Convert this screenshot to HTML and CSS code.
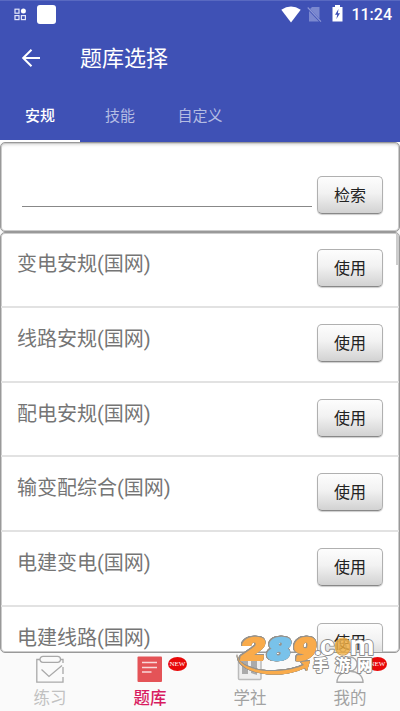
FILE: index.html
```html
<!DOCTYPE html>
<html lang="zh-CN">
<head>
<meta charset="utf-8">
<title>题库选择</title>
<link rel="stylesheet" href="styles.css">
</head>
<body>
<div class="app">
  <header class="header">
    <div class="status">
      <svg class="status-grid" width="13" height="13" viewBox="0 0 13 13" fill="none" stroke="#e3e6fa" stroke-width="1.2"><rect x="1" y="1.2" width="4" height="4"/><rect x="1" y="7.6" width="4" height="4"/><rect x="7.4" y="7.6" width="4" height="4"/><circle cx="9.4" cy="3" r="2.5" fill="#fff" stroke="none"/></svg>
      <span class="status-square"></span>
      <svg class="wifi" width="20" height="17" viewBox="0 0 20 17"><path d="M.3 3.7Q10-2.7 19.700 3.700L10 16.500Z" fill="#fff"/></svg>
      <svg class="sim" width="15" height="17" viewBox="0 0 15 17"><path d="M5 1H12.500V12.800L3 3ZM2 5L12 15.500H2Z" fill="#7b88cf"/><path d="M.7 1.500L14 15.600" stroke="#8d98d6" stroke-width="1.100"/></svg>
      <svg class="battery" width="11" height="17" viewBox="0 0 11 17"><path d="M3 0H8V2H10.500V16.500H.5V2H3Z" fill="#fff"/><path d="M6.500 4L3 9.800H5.200L4.400 14L8 8.300H5.900Z" fill="#3f51b5"/></svg>
      <span class="clock">11:24</span>
    </div>
    <div class="toolbar">
      <svg class="back" width="20" height="20" viewBox="0 0 20 20" fill="none" stroke="#fff" stroke-width="2"><path d="M19 10H2.500M10.500 1.700L2.200 10L10.500 18.300"/></svg>
      <h1 class="title">题库选择</h1>
    </div>
    <nav class="tabs">
      <span class="tab active">安规</span><span class="tab">技能</span><span class="tab">自定义</span>
    </nav>
  </header>
  <section class="card search">
    <input class="query" type="text" aria-label="检索">
    <button class="btn">检索</button>
  </section>
  <main class="card list">
    <span class="scroll"></span>
    <div class="row"><span class="name">变电安规(国网)</span><button class="btn">使用</button></div>
    <div class="row"><span class="name">线路安规(国网)</span><button class="btn">使用</button></div>
    <div class="row"><span class="name">配电安规(国网)</span><button class="btn">使用</button></div>
    <div class="row"><span class="name">输变配综合(国网)</span><button class="btn">使用</button></div>
    <div class="row"><span class="name">电建变电(国网)</span><button class="btn">使用</button></div>
    <div class="row"><span class="name">电建线路(国网)</span><button class="btn">使用</button></div>
  </main>
  <footer class="nav">
    <div class="item pale">
      <svg width="30" height="29" viewBox="0 0 30 29" fill="none" stroke="#a9a9a9" stroke-width="1.300"><path d="M5 4.500H1.800V27.200H28V22M28 19V12M28 8V4.500H25"/><rect x="5" y="1.300" width="20.500" height="6" rx="3"/><path d="M6.500 14.500L14 21.500L27 10.500"/></svg>
      <span>练习</span>
    </div>
    <div class="item selected">
      <svg width="30" height="29" viewBox="0 0 30 29"><rect x="2.500" y="1.500" width="24.500" height="25.500" rx="1" fill="#e45357"/><path d="M7 7.500H22M7 12.500H22M7 17H16.500" stroke="#f9d8d9" stroke-width="1.500"/></svg>
      <span>题库</span><b class="badge">NEW</b>
    </div>
    <div class="item">
      <svg width="30" height="29" viewBox="0 0 30 29"><rect x="3.500" y="3" width="22.500" height="21.500" rx="1" fill="#eee" stroke="#bbb" stroke-width="1.500"/><path d="M7 4H13V19H7ZM16 4H22V20L16 18Z" fill="#aaa"/></svg>
      <span>学社</span>
    </div>
    <div class="item">
      <svg width="30" height="29" viewBox="0 0 30 29" fill="none" stroke="#aaa" stroke-width="1.400"><circle cx="15" cy="9" r="7"/><path d="M2 27.300C2 12.500 28 12.500 28 27.300Z" fill="#fafafa"/></svg>
      <span>我的</span><b class="badge">NEW</b>
    </div>
  </footer>
  <svg class="mark" width="150" height="46" viewBox="0 0 150 46">
    <circle cx="107" cy="11" r="8.500" fill="#f3ae3d" opacity=".8"/>
    <g class="outline">
      <path d="M2 18C-1 31 22 37 40 36C52 35.500 62 33 68 30L65 27L74 26L71 36L69 33C55 40 38 41 24 38C8 35 0 27 2 18Z" fill="#f9ab4b"/>
      <g class="mark-num" stroke-width="2" stroke-linejoin="round" transform="skewX(-10)">
        <text x="8" y="25" textLength="24" lengthAdjust="spacingAndGlyphs" fill="#f9ab4b" stroke="#f9ab4b">2</text>
        <text x="34" y="25" textLength="24" lengthAdjust="spacingAndGlyphs" fill="#79c2ea" stroke="#79c2ea">8</text>
        <text x="60" y="25" textLength="23" lengthAdjust="spacingAndGlyphs" fill="#f9ab4b" stroke="#f9ab4b">9</text>
      </g>
    </g>
    <g stroke="#8b8b8b" stroke-width="1.800" stroke-linejoin="round" paint-order="stroke" fill="#fff">
      <text class="mark-com" y="20"><tspan x="78">.</tspan><tspan x="84">c</tspan><tspan x="99" fill="none" stroke="#d7a34e" stroke-width="1">o</tspan><tspan x="114">m</tspan></text>
      <text class="mark-cn" y="35.500"><tspan x="77">手</tspan><tspan x="99">游</tspan><tspan x="121">网</tspan></text>
    </g>
  </svg>
</div>
</body>
</html>
```
FILE: styles.css
```css
* { box-sizing: border-box; }
body { margin: 0; background: #fafafa; font-family: Roboto, "Noto Sans CJK SC", sans-serif; }
.app { position: relative; width: 400px; height: 711px; display: flex; flex-direction: column; overflow: hidden; }
.header { height: 142px; flex: none; background: #3f51b5; color: #fff; border-top: 1px solid #5969c1; }
.status { height: 27px; display: flex; align-items: center; padding: 0 8px 0 14px; }
.status-square { width: 19px; height: 19px; border-radius: 3px; background: #fff; margin: -1px 0 0 10px; }
.status-grid { margin-top: -1px; }
.wifi { margin-left: auto; margin-top: -1px; }
.sim { margin-left: 6px; margin-top: -1px; }
.battery { margin-left: 10px; margin-top: -2px; }
.clock { margin-left: 8px; font-size: 16px; font-weight: 500; line-height: 27px; }
.toolbar { height: 60px; display: flex; align-items: center; padding-left: 21px; }
.title { margin: 2px 0 0 39px; font-size: 22px; font-weight: 400; line-height: 60px; }
.tabs { height: 54px; display: flex; }
.tab { width: 80px; text-align: center; font-size: 15px; line-height: 57px; color: #b4bce3; }
.tab.active { color: #fff; font-weight: 500; border-bottom: 2px solid #fff; }
.card { flex: none; background: #fff; border: 1px solid #999; border-radius: 5px; box-shadow: inset 0 0 0 1px #ccc; }
.search { height: 90px; display: flex; align-items: flex-start; padding: 33px 16.500px 0 20.500px; box-shadow: inset 0 0 0 1px #ccc, inset 0 4px 3px -2px #ddd; }
.query { width: 290px; height: 31px; border: 0; border-bottom: 1px solid #888; background: transparent; outline: 0; padding: 0; }
.btn { flex: none; width: 66px; height: 38px; margin: 0 0 0 auto; padding: 2px 0 0 1px; font: 400 16px/34px Roboto, "Noto Sans CJK SC", sans-serif; color: #222; border: 1px solid #b0b0b0; border-bottom-color: #888; border-radius: 5px; background: linear-gradient(#fdfdfd, #f2f2f2 45%, #d2d2d2); box-shadow: 0 1px 1px #ccc; }
.list { position: relative; height: 421px; overflow: hidden; }
.row { height: 74.800px; display: flex; align-items: flex-start; padding: 16px 16.500px 0 16px; background: linear-gradient(#e2e2e2, #e2e2e2) 0 72.800px / 100% 2px no-repeat; }
.name { font-size: 20px; line-height: 30px; color: #757575; }
.scroll { position: absolute; top: 0; right: 0; width: 3px; height: 32px; background: #ccc; }
.nav { flex: 1; display: flex; background: #fafafa; }
.item { position: relative; width: 100px; display: flex; flex-direction: column; align-items: center; font-size: 16.500px; line-height: 26px; color: #a2a2a2; padding-top: 2px; }
.item svg { display: block; margin-bottom: 2px; }
.pale { color: #c1c1c1; }
.selected { color: #d81b60; font-weight: 500; }
.badge { position: absolute; left: 68px; top: 4px; width: 19px; height: 14px; border-radius: 50%; background: #e80909; color: #fff; font: 400 7px/14px "Liberation Serif", serif; text-align: center; }
.mark { position: absolute; left: 236px; top: 635px; overflow: visible; }
.outline { filter: drop-shadow(.6px 0 0 #96928c) drop-shadow(-.6px 0 0 #96928c) drop-shadow(0 .6px 0 #96928c) drop-shadow(0 -.6px 0 #96928c); }
.mark-num { font: 900 31px Roboto, sans-serif; }
.mark-com { font: 700 28px Roboto, sans-serif; }
.mark-cn { font: 900 15.500px "Noto Sans CJK SC", sans-serif; }
```
